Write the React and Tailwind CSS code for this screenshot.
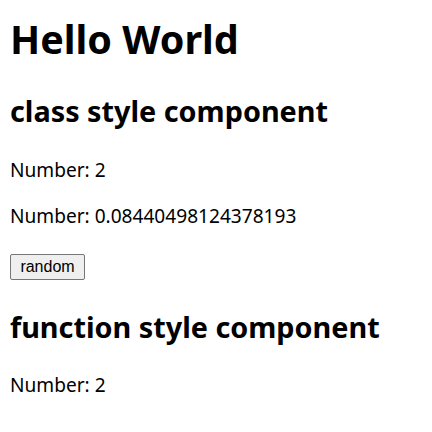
export default function App() {
  const font = { fontFamily: '"Noto Sans", "Noto Sans CJK KR", sans-serif' };
  return (
    <div className="flex flex-col items-start px-[10px] text-black bg-white min-h-[432px]" style={font}>
      <h1 className="mt-[17px] text-[39.5px] font-bold leading-[44px] h-[44px]">Hello World</h1>
      <h2 className="mt-[33px] text-[28.8px] font-bold leading-[34px] h-[34px]">class style component</h2>
      <p className="mt-[30px] text-[19.1px] leading-[24px] h-[24px]">Number: 2</p>
      <p className="mt-[22px] text-[19.1px] leading-[24px] h-[24px]">Number: 0.08440498124378193</p>
      <button className="mt-[26px] h-[26px] w-[75px] bg-[#efefef] border border-[#767676] rounded-[2px] text-[16px] leading-[20px]" style={{ fontFamily: '"Liberation Sans", Arial, sans-serif' }}>random</button>
      <h2 className="mt-[30px] text-[28.8px] font-bold leading-[34px] h-[34px]">function style component</h2>
      <p className="mt-[29px] text-[19.1px] leading-[24px] h-[24px]">Number: 2</p>
    </div>
  );
}
